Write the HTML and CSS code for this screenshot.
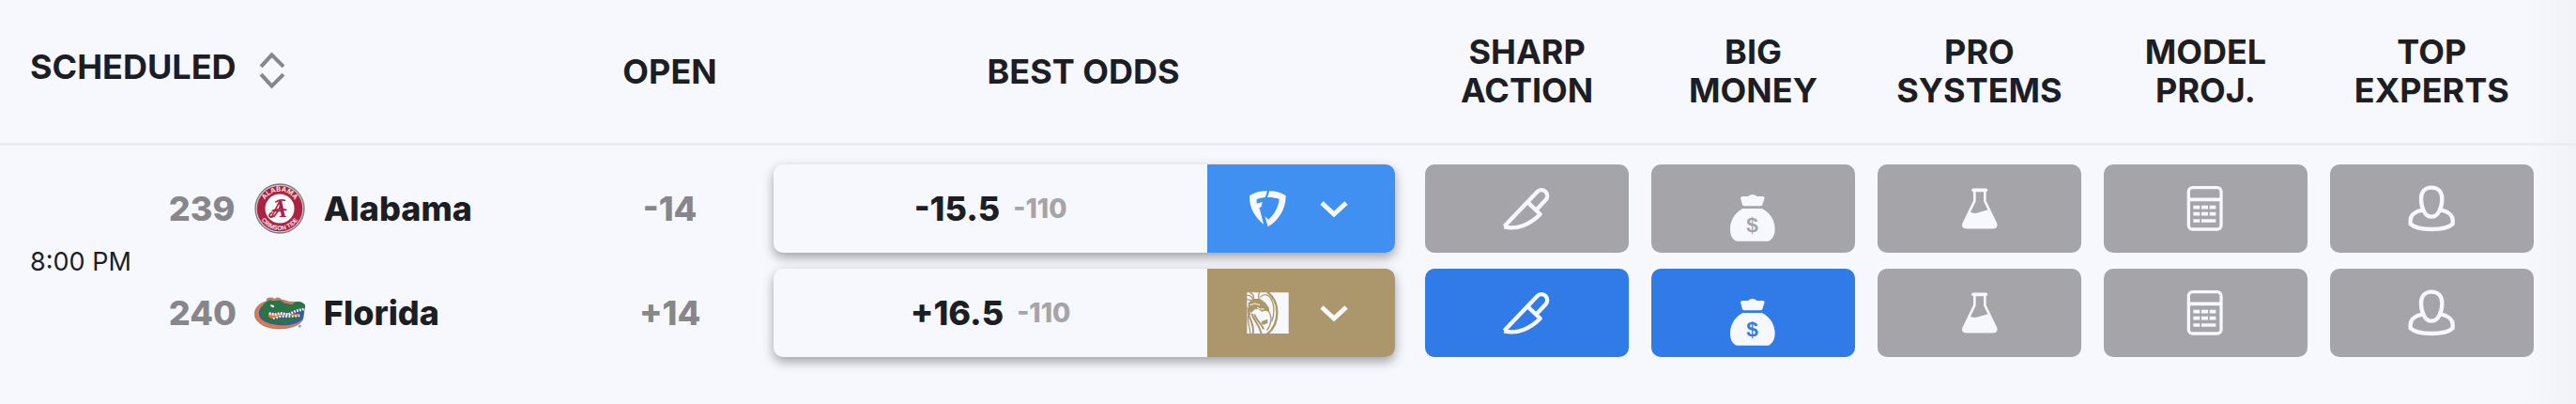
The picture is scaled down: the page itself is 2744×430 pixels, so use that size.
FILE: index.html
```html
<!DOCTYPE html>
<html lang="en">
<head>
<meta charset="UTF-8">
<meta name="viewport" content="width=device-width, initial-scale=1.0">
<title>Odds</title>
<link rel="stylesheet" href="styles.css">
</head>
<body>
  <!-- Shared icons -->
  <svg class="sprite" aria-hidden="true">
    <symbol id="chevron" viewBox="0 0 30 18">
      <path d="M2 3l13 12L28 3" fill="none" stroke="currentColor" stroke-width="5"/>
    </symbol>
    <symbol id="knife" viewBox="64 -11 216 216">
      <g fill="none" stroke="currentColor" stroke-width="13" stroke-linejoin="round">
        <path d="M98 154L204 43a18 18 0 0 1 26 0c8 8 7 19 0 27L201 101"/>
        <path d="M174 78L213 115C182 146 140 166 98 155"/>
      </g>
    </symbol>
    <symbol id="money" viewBox="64 -11 216 216">
      <path fill="currentColor" d="M130 63q1-5 7-5l17 0q6-6 14-6t15 6l18 0q6 0 6 5l-7 22q-1 4-6 4H141q-4 0-5-4zM137 97H199C227 111 240 137 240 162C240 178 235 190 226 197Q223 201 218 201H119Q114 201 110 197C101 190 97 178 97 162C97 137 110 111 137 97z"/>
      <text class="dollar" x="168" y="173" text-anchor="middle">$</text>
    </symbol>
    <symbol id="flask" viewBox="38 -11 216 216">
      <path fill="none" stroke="currentColor" stroke-width="8" stroke-linejoin="round" d="M132 42V73L97 145Q93 157 105 157H192Q203 157 200 145L165 73V42"/>
      <path fill="none" stroke="currentColor" stroke-width="11" stroke-linecap="round" d="M128 38H168"/>
      <path fill="currentColor" d="M116 107C134 118 150 107 174 101L202 146Q205 161 192 161H105Q91 159 95 146z"/>
    </symbol>
    <symbol id="calculator" viewBox="43 -11 216 216">
      <g fill="none" stroke="currentColor">
        <rect x="98" y="30" width="104" height="133" rx="13" stroke-width="10"/>
        <path d="M98 68H202" stroke-width="11"/>
        <path d="M113 93H134M139 93H160M165 93H185M113 114H134M139 114H160M165 114H185M113 136H134M139 136H185" stroke-width="11"/>
      </g>
    </symbol>
    <symbol id="expert" viewBox="43 -11 216 216">
      <g fill="none" stroke="currentColor" stroke-width="13" stroke-linejoin="round">
        <path d="M151 30C131 30 118 43 118 66C118 94 130 123 151 123C173 123 185 94 185 66C185 43 172 30 151 30z"/>
        <path d="M122 102C101 106 84 117 84 134V146C94 155 120 163 152 163S209 155 219 146V134C219 117 202 106 182 102"/>
      </g>
    </symbol>
  </svg>

  <table class="odds-table">
    <colgroup>
      <col class="col-time">
      <col class="col-team">
      <col class="col-open">
      <col class="col-odds">
      <col class="col-signal">
      <col class="col-signal">
      <col class="col-signal">
      <col class="col-signal">
      <col class="col-signal">
      <col class="col-end">
    </colgroup>
    <thead>
      <tr>
        <th class="scheduled" colspan="2">
          <button class="sort" type="button">
            Scheduled
            <svg class="sort-icon" viewBox="0 0 27 38" aria-hidden="true">
              <path d="M2 15L13 3l12 12M2 23l11 12 12-12" fill="none" stroke="currentColor" stroke-width="4"/>
            </svg>
          </button>
        </th>
        <th>Open</th>
        <th>Best Odds</th>
        <th>Sharp<br>Action</th>
        <th>Big<br>Money</th>
        <th>Pro<br>Systems</th>
        <th>Model<br>Proj.</th>
        <th>Top<br>Experts</th>
        <th></th>
      </tr>
    </thead>
    <tbody>
      <tr class="away">
        <td class="time" rowspan="2">8:00 PM</td>
        <td>
          <div class="team">
            <span class="rotation">239</span>
            <svg class="team-logo" viewBox="65 46 160 160" role="img" aria-label="Alabama logo">
              <defs>
                <path id="arc-top" d="M91 126a54 54 0 0 1 108 0"/>
                <path id="arc-bottom" d="M77 126a68 68 0 0 0 136 0"/>
              </defs>
              <circle cx="145" cy="126" r="79" fill="#77777c"/>
              <circle cx="145" cy="126" r="75" fill="#d9d3d8"/>
              <circle cx="145" cy="126" r="72" fill="#ab2340"/>
              <circle cx="145" cy="126" r="46" fill="#fff"/>
              <text class="ring-text"><textPath href="#arc-top" startOffset="50%" text-anchor="middle">ALABAMA</textPath></text>
              <text class="ring-text small"><textPath href="#arc-bottom" startOffset="50%" text-anchor="middle">CRIMSON TIDE</textPath></text>
              <text class="script-a" x="143" y="152" text-anchor="middle">A</text>
              <path d="M119 139c-11 7-8 17 3 13 14-5 18-22 27-38M122 133q20-9 43-3M133 105q12-9 28-5" fill="none" stroke="#ab2340" stroke-width="5" stroke-linecap="round"/>
            </svg>
            <span class="team-name">Alabama</span>
          </div>
        </td>
        <td class="open">-14</td>
        <td class="odds-cell">
          <div class="odds">
            <div class="line">-15.5 <span class="price">-110</span></div>
            <button class="book fanduel" type="button" aria-label="FanDuel">
              <svg class="book-logo" viewBox="117 89 135 135" aria-hidden="true">
                <path fill="currentColor" d="M183 99L179 111L176 119C166 120 157 122 149 125V139L167 134L164 149L157 153L160 162L165 181L171 205C146 185 124 154 126 114C144 103 161 99 183 99zM190 99C210 99 227 104 242 114C243 157 217 196 185 213L175 180L187 190C205 174 218 151 221 125C211 121 198 119 183 119z"/>
              </svg>
              <svg class="book-chevron" aria-hidden="true"><use href="#chevron"/></svg>
            </button>
          </div>
        </td>
        <td class="signal-cell"><button class="signal" type="button" aria-label="Sharp action, Alabama"><svg class="icon"><use href="#knife"/></svg></button></td>
        <td class="signal-cell"><button class="signal" type="button" aria-label="Big money, Alabama"><svg class="icon"><use href="#money"/></svg></button></td>
        <td class="signal-cell"><button class="signal" type="button" aria-label="Pro systems, Alabama"><svg class="icon"><use href="#flask"/></svg></button></td>
        <td class="signal-cell"><button class="signal" type="button" aria-label="Model projection, Alabama"><svg class="icon"><use href="#calculator"/></svg></button></td>
        <td class="signal-cell"><button class="signal" type="button" aria-label="Top experts, Alabama"><svg class="icon"><use href="#expert"/></svg></button></td>
        <td></td>
      </tr>
      <tr class="home">
        <td>
          <div class="team">
            <span class="rotation">240</span>
            <svg class="team-logo" viewBox="69 380 160 160" role="img" aria-label="Florida logo">
              <path fill="#e07a4b" stroke="#5c6f94" stroke-width="2" d="M108 424Q106 412 119 413Q128 411 132 417Q146 408 153 418L178 425L217 427L229 435L222 480C215 500 180 510 146 510C100 510 70 488 70 464C70 444 86 428 108 424z"/>
              <path fill="#2c5fa8" d="M108 430L214 434L227 440L223 476C212 494 178 501 148 499C108 496 84 483 83 464C82 447 93 436 108 430z"/>
              <path fill="#2b7443" d="M110 424Q116 415 128 422L150 420L164 429L188 434Q200 420 216 427Q230 432 229 443L200 451L176 459L158 456L147 461L120 456L110 470L122 481L148 478L168 476L196 474L214 472C200 490 172 491 148 493C112 494 88 478 89 460C90 440 98 430 110 424z"/>
              <path fill="#e07a4b" d="M114 459L134 463L158 461L190 464L214 463L206 472L170 469L140 475L122 478L112 470z"/>
              <path fill="none" stroke="#fff" stroke-width="8" stroke-dasharray="5 4" d="M116 462L134 465L151 461L176 465L200 454L225 448"/>
              <path fill="none" stroke="#fff" stroke-width="6" stroke-dasharray="5 5" d="M128 478L150 472L180 472L216 469"/>
              <path fill="#fff" d="M121 433l11 5-3 6-9-5z"/>
              <path fill="none" stroke="#2c5fa8" stroke-width="3" d="M113 429q-4 8 5 15M142 427q4 8 18 8"/>
              <circle cx="212" cy="502" r="4" fill="#7fa0d2"/>
            </svg>
            <span class="team-name">Florida</span>
          </div>
        </td>
        <td class="open">+14</td>
        <td class="odds-cell">
          <div class="odds">
            <div class="line">+16.5 <span class="price">-110</span></div>
            <button class="book betmgm" type="button" aria-label="BetMGM">
              <svg class="book-logo" viewBox="117 425 135 135" aria-hidden="true">
                <path fill="currentColor" d="M118 426H251V557H118z"/>
                <g fill="none" stroke="#ab976b">
                  <path stroke-width="7" d="M182 424C205 440 214 465 214 490C214 520 203 543 182 559"/>
                  <path stroke-width="4" d="M118 435q16-1 20 16M158 425q-5 10-2 22M160 441q8-9 19-8 20 7 24 39 3 25-6 46M118 447q17 8 22-1M127 426q14 6 12 19"/>
                  <path stroke-width="6" d="M122 480C118 508 143 519 137 558M133 493C137 514 155 522 164 557M142 495C145 513 165 526 171 543"/>
                  <path stroke-width="4" d="M121 500C119 525 129 540 128 558M174 473q20 14 21 39-1 18-13 35M118 474q12 10 8 25"/>
                </g>
                <path fill="#ab976b" d="M122 459L139 446L160 446L176 458L188 474L190 488L177 484L165 487L154 479L143 480L132 491L122 479zM166 517L184 511L184 523L171 529L163 525z"/>
                <path stroke="currentColor" stroke-width="3" fill="none" d="M127 466q17-9 32 0M150 474q9 7 23 5"/>
              </svg>
              <svg class="book-chevron" aria-hidden="true"><use href="#chevron"/></svg>
            </button>
          </div>
        </td>
        <td class="signal-cell"><button class="signal active" type="button" aria-label="Sharp action, Florida"><svg class="icon"><use href="#knife"/></svg></button></td>
        <td class="signal-cell"><button class="signal active" type="button" aria-label="Big money, Florida"><svg class="icon"><use href="#money"/></svg></button></td>
        <td class="signal-cell"><button class="signal" type="button" aria-label="Pro systems, Florida"><svg class="icon"><use href="#flask"/></svg></button></td>
        <td class="signal-cell"><button class="signal" type="button" aria-label="Model projection, Florida"><svg class="icon"><use href="#calculator"/></svg></button></td>
        <td class="signal-cell"><button class="signal" type="button" aria-label="Top experts, Florida"><svg class="icon"><use href="#expert"/></svg></button></td>
        <td></td>
      </tr>
    </tbody>
  </table>
</body>
</html>
```
FILE: styles.css
```css
* {
  box-sizing: border-box;
}

body {
  margin: 0;
  min-height: 100vh;
  background: linear-gradient(to left, #f1f2f6, #f7f8fd 56px);
  color: #1d1e23;
  font-family: Inter, "Liberation Sans", sans-serif;
  font-size: 36px;
}

button {
  border: 0;
  padding: 0;
  background: none;
  color: inherit;
  font: inherit;
  cursor: pointer;
}

.sprite {
  display: none;
}

.odds-table {
  width: 100%;
  table-layout: fixed;
  border-collapse: separate;
  border-spacing: 0;
}

/* Column widths */
.col-time { width: 6.3%; }
.col-team { width: 16.48%; }
.col-open { width: 6.45%; }
.col-odds { width: 25.66%; }
.col-signal { width: 8.78%; }

th {
  height: 155px;
  padding: 0;
  border-bottom: 3px solid #ebecf1;
  font-weight: 700;
  line-height: 41px;
  text-align: center;
  text-transform: uppercase;
}

td {
  padding: 0;
}

.away td {
  padding-top: 20px;
  padding-bottom: 8px;
}

.home td {
  padding-top: 9px;
  padding-bottom: 20px;
}

.scheduled {
  padding-bottom: 6px;
  padding-left: 32px;
  text-align: left;
}

.sort {
  display: flex;
  align-items: flex-start;
  gap: 24px;
  text-transform: uppercase;
}

.sort-icon {
  width: 28px;
  height: 40px;
  margin-top: 4px;
  color: #86868b;
}

.away .time {
  padding: 22px 0 20px 32px;
  font-size: 27px;
  white-space: nowrap;
}

.team {
  display: flex;
  align-items: center;
  font-weight: 800;
}

.rotation {
  width: 98px;
  padding-left: 7px;
  color: #86868b;
}

.team-logo {
  width: 54px;
  height: 54px;
  margin-right: 20px;
}

.ring-text {
  fill: #f0dfe5;
  font-size: 22px;
  font-weight: 700;
}

.ring-text.small {
  font-size: 19px;
}

.script-a {
  fill: #ab2340;
  font-family: "Liberation Serif", serif;
  font-size: 76px;
  font-style: italic;
  font-weight: 700;
}

.open {
  color: #86868b;
  font-weight: 800;
  text-align: center;
}

/* Odds box with sportsbook menu */
.odds-cell {
  padding: 0 20px 0 22px;
}

.odds {
  display: flex;
  height: 94px;
  border-radius: 10px;
  box-shadow: 0 5px 12px rgba(29, 30, 35, 0.4);
  background: #f7f8fd;
  overflow: hidden;
}

.line {
  flex: 1;
  display: flex;
  align-items: center;
  justify-content: center;
  gap: 14px;
  font-weight: 800;
}

.price {
  color: #a5a4a9;
  font-size: 28px;
}

.book {
  display: flex;
  align-items: center;
  gap: 33px;
  width: 200px;
  padding-left: 42px;
  color: #f7f8fd;
}

.fanduel { background: #4090f2; }
.betmgm { background: #ab976b; }

.book-logo {
  width: 45px;
  height: 45px;
}

.book-chevron {
  width: 30px;
  height: 18px;
}

/* Signal buttons */
.signal-cell {
  padding: 0 12px;
}

.signal {
  --signal-color: #a5a4a9;
  display: flex;
  align-items: center;
  justify-content: center;
  width: 100%;
  height: 94px;
  border-radius: 10px;
  background: var(--signal-color);
  color: #f7f8fd;
}

.signal.active {
  --signal-color: #307be8;
}

.icon {
  width: 72px;
  height: 72px;
}

.dollar {
  fill: var(--signal-color);
  font-family: "Liberation Sans Narrow", "Liberation Sans", sans-serif;
  font-size: 68px;
  font-weight: 700;
}
```
